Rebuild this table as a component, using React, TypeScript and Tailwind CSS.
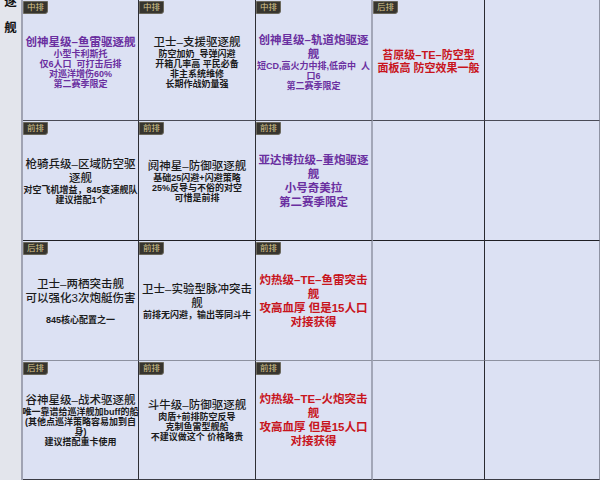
import React from "react";

type Line = { t: string; k: "title" | "small" | "mid" | "gap" };
type Cell = { badge?: string; color?: "purple" | "red" | "black"; lines?: Line[] };

const T = (t: string): Line => ({ t, k: "title" });
const S = (t: string): Line => ({ t, k: "small" });
const M = (t: string): Line => ({ t, k: "mid" });
const G: Line = { t: "", k: "gap" };

const rows: Cell[][] = [
  [
    { badge: "中排", color: "purple", lines: [T("创神星级–鱼雷驱逐舰"), S("小型卡利斯托"), S("仅6人口  可打击后排"), S("对巡洋增伤60%"), S("第二赛季限定")] },
    { badge: "中排", color: "black", lines: [T("卫士–支援驱逐舰"), S("防空加奶  导弹闪避"), S("开箱几率高 平民必备"), S("非主系统维修"), S("长期作战奶量强")] },
    { badge: "中排", color: "purple", lines: [T("创神星级–轨道炮驱逐"), T("舰"), S("短CD,高火力中排,低命中  人"), S("口6"), S("第二赛季限定")] },
    { badge: "后排", color: "red", lines: [M("苔原级–TE–防空型"), M("面板高 防空效果一般")] },
    {},
  ],
  [
    { badge: "前排", color: "black", lines: [T("枪骑兵级–区域防空驱"), T("逐舰"), S("对空飞机增益，845变速舰队"), S("建议搭配1个")] },
    { badge: "前排", color: "black", lines: [T("阋神星–防御驱逐舰"), S("基础25闪避+闪避策略"), S("25%反导与不俗的对空"), S("可惜是前排")] },
    { badge: "前排", color: "purple", lines: [T("亚达博拉级–重炮驱逐"), T("舰"), T("小号奇美拉"), T("第二赛季限定")] },
    {},
    {},
  ],
  [
    { badge: "后排", color: "black", lines: [T("卫士–两栖突击舰"), T("可以强化3次炮艇伤害"), G, S("845核心配置之一")] },
    { badge: "前排", color: "black", lines: [T("卫士–实验型脉冲突击"), T("舰"), S("前排无闪避，输出等同斗牛")] },
    { badge: "前排", color: "red", lines: [T("灼热级–TE–鱼雷突击"), T("舰"), T("攻高血厚 但是15人口"), T("对接获得")] },
    {},
    {},
  ],
  [
    { badge: "后排", color: "black", lines: [T("谷神星级–战术驱逐舰"), S("唯一靠谱给巡洋舰加buff的船"), S("(其他点巡洋策略容易加到自"), S("身)"), S("建议搭配重卡使用")] },
    { badge: "前排", color: "black", lines: [T("斗牛级–防御驱逐舰"), S("肉盾+前排防空反导"), S("克制鱼雷型舰船"), S("不建议做这个 价格略贵")] },
    { badge: "前排", color: "red", lines: [T("灼热级–TE–火炮突击"), T("舰"), T("攻高血厚 但是15人口"), T("对接获得")] },
    {},
    {},
  ],
];

const colCls = [
  "w-[116px] border-r border-r-[#2e2e34]",
  "w-[117px] border-r border-r-[#2e2e34]",
  "w-[117px] border-r-2 border-r-[#a3a7b8]",
  "w-[112px] border-r-[1.5px] border-r-[#2a2a30]",
  "w-[115px] border-r border-r-[#8f93a3]",
];

const rowCls = [
  "h-[121px] border-b border-b-[#4a4b56] pt-[3px]",
  "h-[120px] border-b-[1.5px] border-b-[#1f1f24]",
  "h-[120px] border-b border-b-[#8d919f]",
  "h-[119px] border-b border-b-[#3a3b44]",
];

const colorCls = {
  purple: "text-[#6a2fa0] font-bold",
  red: "text-[#c8141c] font-bold",
  black: "text-[#1b1b1b] font-medium",
};

function CellView({ cell, ci, ri }: { cell: Cell; ci: number; ri: number }) {
  const color = cell.color ?? "black";
  return (
    <div className={`relative box-border flex flex-col items-center justify-center bg-[#dce1f3] text-center ${colCls[ci]} ${rowCls[ri]}`}>
      {cell.badge && (
        <div className="absolute left-0 top-[1px] flex h-[13px] items-center rounded-br-[3px] border border-[#6b685c] bg-[#37352f] px-[3px] text-[8.5px] leading-none text-[#d8c58e]">
          {cell.badge}
        </div>
      )}
      {cell.lines?.map((l, i) => {
        if (l.k === "gap") return <div key={i} className="h-[10px]" />;
        const size =
          l.k === "title"
            ? "text-[11.5px] leading-[14px]"
            : l.k === "mid"
            ? "text-[11px] leading-[13px]"
            : "text-[9px] leading-[10px]";
        return (
          <div key={i} className={`whitespace-pre ${size} ${colorCls[color]} ${l.k === "small" && color === "black" ? "font-semibold" : ""}`}>
            {l.t}
          </div>
        );
      })}
    </div>
  );
}

export default function App() {
  return (
    <div
      className="flex h-[480px] w-[600px] overflow-hidden bg-[#dce1f3]"
      style={{ fontFamily: '"Liberation Sans", "Noto Sans CJK SC", sans-serif' }}
    >
      <div className="box-border flex h-[480px] w-[23px] shrink-0 flex-col items-center border-r-2 border-r-[#a0a3b3] bg-[#e3e5ec]">
        <div className="-mt-[5px] flex flex-col items-center gap-[12px] text-[12.5px] font-bold leading-[14px] text-[#111]">
          <span>逐</span>
          <span>舰</span>
        </div>
      </div>
      <div className="flex flex-col">
        {rows.map((row, ri) => (
          <div key={ri} className="flex">
            {row.map((cell, ci) => (
              <CellView key={ci} cell={cell} ci={ci} ri={ri} />
            ))}
          </div>
        ))}
      </div>
    </div>
  );
}
